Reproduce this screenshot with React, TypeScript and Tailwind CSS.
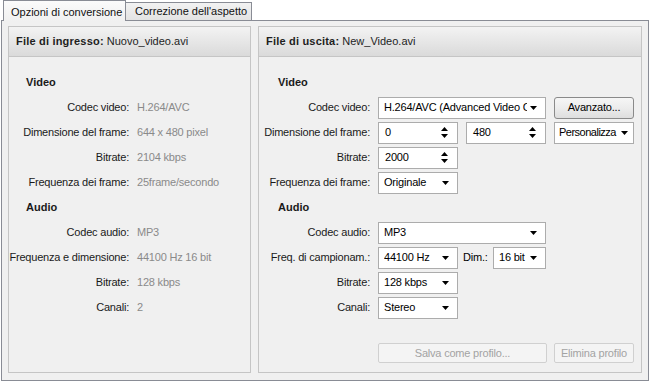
import React from "react";

const Arrow = () => (
  <svg width="7" height="4" viewBox="0 0 7 4" className="shrink-0 ml-[3px]">
    <path d="M0 0H7L3.5 4Z" fill="#000" />
  </svg>
);

const Spin = () => (
  <div className="flex flex-col items-center gap-[3px] shrink-0">
    <svg width="7" height="4" viewBox="0 0 7 4">
      <path d="M0 4H7L3.5 0Z" fill="#000" />
    </svg>
    <svg width="7" height="4" viewBox="0 0 7 4">
      <path d="M0 0H7L3.5 4Z" fill="#000" />
    </svg>
  </div>
);

function Combo({ text, className }: { text: string; className: string }) {
  return (
    <div
      className={
        "flex items-center h-[22px] bg-white border border-[#acacac] whitespace-nowrap shrink-0 " +
        className
      }
    >
      <span className="flex-1 overflow-hidden">{text}</span>
      <Arrow />
    </div>
  );
}

function SpinBox({ text }: { text: string }) {
  return (
    <div className="flex items-center justify-between h-[22px] w-[80px] bg-white border border-[#acacac] pl-[6px] pr-[9px] shrink-0">
      <span>{text}</span>
      <Spin />
    </div>
  );
}

function LRow({ label, value }: { label: string; value: string }) {
  return (
    <div className="flex items-center h-[25px]">
      <div className="w-[120px] text-right whitespace-nowrap text-[#1a1a1a]">{label}</div>
      <div className="ml-[8px] text-[#8a8a8a] whitespace-nowrap">{value}</div>
    </div>
  );
}

function RRow({ label, children }: { label: string; children: React.ReactNode }) {
  return (
    <div className="flex items-center h-[25px]">
      <div className="w-[111px] text-right whitespace-nowrap text-[#1a1a1a]">{label}</div>
      <div className="ml-[8px] flex items-center gap-[8px]">{children}</div>
    </div>
  );
}

function Header({ title, file }: { title: string; file: string }) {
  return (
    <div className="h-[30px] flex items-center pl-[7px] border-b border-[#c5c5c5] bg-gradient-to-b from-[#f3f3f3] to-[#dadada] whitespace-nowrap text-[11px] tracking-normal text-[#1e1e1e]">
      <span className="font-bold tracking-[0.2px]">{title}</span>
      <span className="ml-[3px]">{file}</span>
    </div>
  );
}

export default function App() {
  return (
    <div className="w-[650px] h-[382px] bg-white text-[11px] tracking-[-0.2px] text-black overflow-hidden font-['Liberation_Sans',Arial,sans-serif]">
      <div className="flex items-end h-[20px] pl-[3px] tracking-normal">
        <div className="relative z-10 h-[21px] -mb-px w-[123px] border border-b-0 border-[#898c95] bg-gradient-to-b from-[#fbfbfb] to-[#f0f0f0] flex items-start pt-[3px] pl-[7px] whitespace-nowrap text-[#111]">
          Opzioni di conversione
        </div>
        <div className="h-[18px] w-[126px] border border-l-0 border-b-0 border-[#898c95] bg-gradient-to-b from-[#f2f2f2] to-[#e3e3e3] flex items-center pl-[9px] whitespace-nowrap text-[#111]">
          Correzione dell'aspetto
        </div>
      </div>
      <div className="ml-px w-[648px] h-[361px] border border-[#898c95] bg-[#f0f0f0] flex gap-[7px] pt-[5px] pb-[7px] px-[6px]">
        <div className="w-[243px] h-full border border-[#c5c5c5] flex flex-col">
          <Header title="File di ingresso:" file="Nuovo_video.avi" />
          <div className="pt-[13px]">
            <div className="h-[25px] flex items-center pl-[17px] font-bold tracking-normal text-[#1a1a1a]">Video</div>
            <LRow label="Codec video:" value="H.264/AVC" />
            <LRow label="Dimensione del frame:" value="644 x 480 pixel" />
            <LRow label="Bitrate:" value="2104 kbps" />
            <LRow label="Frequenza dei frame:" value="25frame/secondo" />
            <div className="h-[25px] flex items-center pl-[17px] font-bold tracking-normal text-[#1a1a1a]">Audio</div>
            <LRow label="Codec audio:" value="MP3" />
            <LRow label="Frequenza e dimensione:" value="44100 Hz 16 bit" />
            <LRow label="Bitrate:" value="128 kbps" />
            <LRow label="Canali:" value="2" />
          </div>
        </div>
        <div className="flex-1 h-full border border-[#c5c5c5] flex flex-col">
          <Header title="File di uscita:" file="New_Video.avi" />
          <div className="pt-[13px]">
            <div className="h-[25px] flex items-center pl-[19px] font-bold tracking-normal text-[#1a1a1a]">Video</div>
            <RRow label="Codec video:">
              <Combo text="H.264/AVC (Advanced Video Coding)" className="w-[168px] pl-[5px] pr-[8px]" />
              <div className="h-[22px] w-[80px] flex items-center justify-center rounded-[3px] border border-[#8a8a8a] bg-gradient-to-b from-[#f6f6f6] via-[#ececec] to-[#dedede] whitespace-nowrap">
                Avanzato...
              </div>
            </RRow>
            <RRow label="Dimensione del frame:">
              <SpinBox text="0" />
              <SpinBox text="480" />
              <Combo text="Personalizza" className="w-[80px] pl-[4px] pr-[5px] tracking-[-0.5px]" />
            </RRow>
            <RRow label="Bitrate:">
              <SpinBox text="2000" />
            </RRow>
            <RRow label="Frequenza dei frame:">
              <Combo text="Originale" className="w-[80px] pl-[5px] pr-[8px]" />
            </RRow>
            <div className="h-[25px] flex items-center pl-[19px] font-bold tracking-normal text-[#1a1a1a]">Audio</div>
            <RRow label="Codec audio:">
              <Combo text="MP3" className="w-[168px] pl-[5px] pr-[8px]" />
            </RRow>
            <RRow label="Freq. di campionam.:">
              <Combo text="44100 Hz" className="w-[80px] pl-[5px] pr-[8px]" />
              <div className="flex items-center -ml-[3px]">
                <span className="w-[30px] whitespace-nowrap">Dim.:</span>
                <Combo text="16 bit" className="w-[53px] pl-[5px] pr-[8px]" />
              </div>
            </RRow>
            <RRow label="Bitrate:">
              <Combo text="128 kbps" className="w-[80px] pl-[5px] pr-[8px]" />
            </RRow>
            <RRow label="Canali:">
              <Combo text="Stereo" className="w-[80px] pl-[5px] pr-[8px]" />
            </RRow>
          </div>
          <div className="flex gap-[7px] pl-[119px] mt-[23px]">
            <div className="h-[20px] w-[169px] flex items-center justify-center rounded-[2px] border border-[#d0d0d0] bg-[#f4f4f4] text-[#a3a3a3] whitespace-nowrap">
              Salva come profilo...
            </div>
            <div className="h-[20px] w-[80px] flex items-center justify-center rounded-[2px] border border-[#d0d0d0] bg-[#f4f4f4] text-[#a3a3a3] whitespace-nowrap">
              Elimina profilo
            </div>
          </div>
        </div>
      </div>
    </div>
  );
}
